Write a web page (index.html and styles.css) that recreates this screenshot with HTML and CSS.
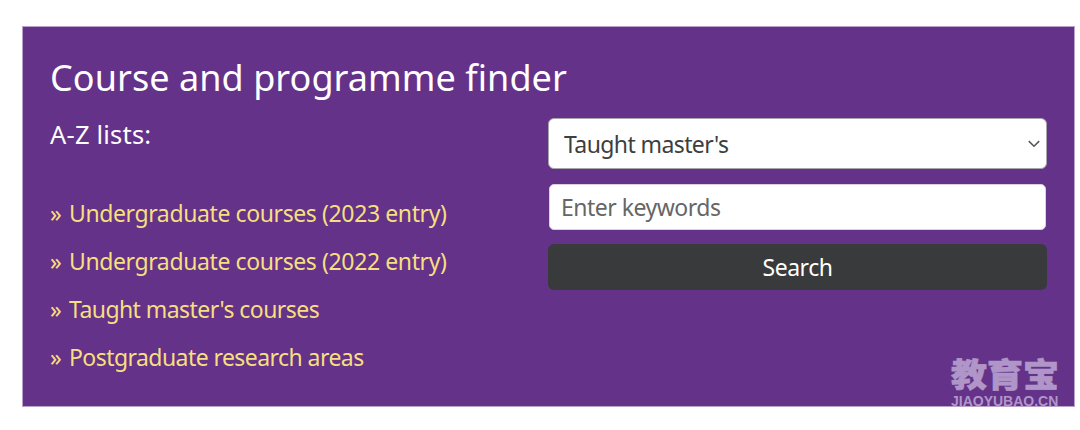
FILE: index.html
```html
<!DOCTYPE html>
<html lang="en">
  <head>
    <meta charset="UTF-8" />
    <meta name="viewport" content="width=device-width, initial-scale=1.0" />
    <title>Course and programme finder</title>
    <link rel="stylesheet" href="styles.css">
  </head>
  <body>
    <div class="finder">
      <h2>Course and programme finder</h2>

      <div class="columns">
        <!-- A-Z lists -->
        <div class="lists">
          <p class="lists-title">A-Z lists:</p>
          <ul>
            <li><span class="raquo">»</span><a href="#" class="link-entry">Undergraduate courses (2023 entry)</a></li>
            <li><span class="raquo">»</span><a href="#" class="link-entry">Undergraduate courses (2022 entry)</a></li>
            <li><span class="raquo">»</span><a href="#">Taught master's courses</a></li>
            <li><span class="raquo">»</span><a href="#">Postgraduate research areas</a></li>
          </ul>
        </div>

        <!-- Search Form -->
        <form class="search-form">
          <div class="select-wrap">
            <select aria-label="Course type">
              <option>Taught master's</option>
            </select>
            <svg class="arrow" width="12" height="8" viewBox="0 0 12 8">
              <path d="M0.8 1.1 L6 6.2 L11.2 1.1" fill="none" stroke="#555" stroke-width="1.5" />
            </svg>
          </div>
          <input type="text" placeholder="Enter keywords" />
          <button type="button">Search</button>
        </form>
      </div>

      <div class="watermark">
        <span class="watermark-name">教育宝</span>
        <span class="watermark-url">JIAOYUBAO.CN</span>
      </div>
    </div>
  </body>
</html>
```
FILE: styles.css
```css
body {
  font-family: "Noto Sans", "Open Sans", sans-serif;
  background-color: #fff;
  margin: 0;
  padding: 26px 5px 0 22px;
}

.finder {
  position: relative;
  box-sizing: border-box;
  height: 381px;
  padding: 27px 27px 0;
  background-color: #643288;
  border: 1px solid #b9a2cb;
  color: #fff;
}

h2 {
  margin: 0;
  font-size: 36px;
  font-weight: 400;
  line-height: 48px;
  letter-spacing: 0.06px;
}

.columns {
  display: grid;
  grid-template-columns: 1fr 499px;
  margin-top: 16px;
}

.lists-title {
  margin: 0;
  font-size: 25.5px;
  line-height: 32px;
  letter-spacing: 0.2px;
}

ul {
  list-style: none;
  margin: 39px 0 0;
  padding: 0;
}

li {
  display: flex;
  height: 48px;
  font-size: 23px;
  line-height: 48px;
  color: #f6df81;
  white-space: nowrap;
}

.raquo {
  width: 19px;
}

li a {
  color: #f6df81;
  text-decoration: none;
  letter-spacing: -0.56px;
}

li .link-entry {
  letter-spacing: -0.39px;
}

.search-form {
  display: flex;
  flex-direction: column;
}

.select-wrap {
  position: relative;
  height: 51px;
}

select,
input,
button {
  display: block;
  box-sizing: border-box;
  width: 100%;
  margin: 0;
  font-family: inherit;
  font-size: 23px;
  letter-spacing: -0.5px;
}

select {
  height: 51px;
  padding: 0 15px;
  appearance: none;
  background-color: #fff;
  border: 1px solid #a9a5ad;
  border-radius: 6px;
  color: #3d3e40;
  letter-spacing: -0.6px;
}

.arrow {
  position: absolute;
  top: 22px;
  right: 7px;
}

input {
  width: auto;
  height: 46px;
  margin: 15px 1px 14px;
  padding: 0 11px;
  border: 1px solid #d9d0e0;
  border-radius: 5px;
}

input::placeholder {
  color: #666;
  opacity: 1;
}

button {
  height: 46px;
  padding: 0;
  background-color: #393a3c;
  border: none;
  border-radius: 6px;
  color: #fff;
  cursor: pointer;
}

.watermark {
  position: absolute;
  right: 15px;
  bottom: -1px;
  width: 108px;
  color: #b096c8;
}

.watermark-name,
.watermark-url {
  display: block;
  white-space: nowrap;
}

.watermark-name {
  margin-bottom: 6px;
  font-family: "Noto Sans CJK SC", sans-serif;
  font-size: 36px;
  font-weight: 900;
  line-height: 34px;
  transform: scaleY(0.92);
  -webkit-text-stroke: 0.7px #b096c8;
}

.watermark-url {
  font-family: "Liberation Sans", Arial, sans-serif;
  font-size: 14px;
  font-weight: 700;
  line-height: 12px;
}
```
